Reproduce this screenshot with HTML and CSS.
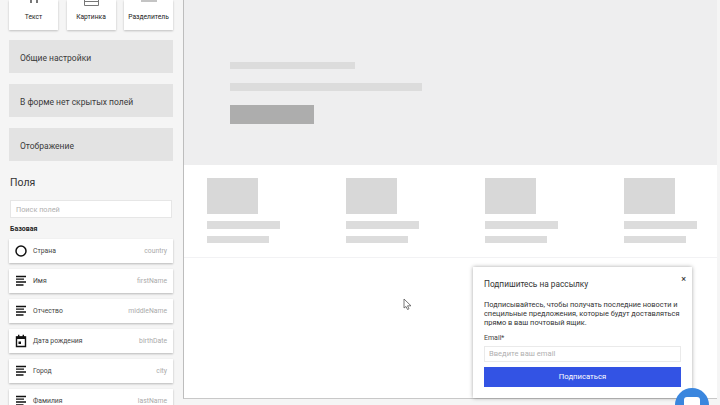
FILE: index.html
```html
<!DOCTYPE html>
<html lang="ru">
<head>
  <meta charset="UTF-8">
  <title>Конструктор формы</title>
  <link rel="stylesheet" href="styles.css">
</head>
<body>
  <div class="app">
    <aside class="sidebar">
      <div class="tiles">
        <div class="tile">
          <svg class="tile-icon" width="16" height="12" viewBox="0 0 16 12"><path d="M5 0v3M11 0v3" stroke="#555" stroke-width="1.6" fill="none"/></svg>
          <span>Текст</span>
        </div>
        <div class="tile">
          <svg class="tile-icon" width="16" height="12" viewBox="0 0 16 12"><path d="M1.5 0v5.500h14V0M1.500 1.500h14" stroke="#777" stroke-width="1" fill="none"/></svg>
          <span>Картинка</span>
        </div>
        <div class="tile">
          <svg class="tile-icon" width="16" height="12" viewBox="0 0 16 12"><path d="M0 0h16v2H0z" fill="#c4c4c4"/></svg>
          <span>Разделитель</span>
        </div>
      </div>

      <div class="panel">Общие настройки</div>
      <div class="panel">В форме нет скрытых полей</div>
      <div class="panel">Отображение</div>

      <h2 class="fields-title">Поля</h2>
      <input class="fields-search" type="text" placeholder="Поиск полей">
      <h3 class="group-title">Базовая</h3>

      <div class="field">
        <svg class="field-icon" width="14" height="14" viewBox="0 0 14 14"><circle cx="7" cy="7" r="5" fill="none" stroke="#111" stroke-width="1.500"/></svg>
        <span class="field-label">Страна</span>
        <span class="field-name">country</span>
      </div>
      <div class="field">
        <svg class="field-icon" width="14" height="14" viewBox="0 0 14 14"><path d="M2 2.500h10M2 5.200h8M2 8h10M2 11h7.500" stroke="#111" stroke-width="1.300" fill="none"/></svg>
        <span class="field-label">Имя</span>
        <span class="field-name">firstName</span>
      </div>
      <div class="field">
        <svg class="field-icon" width="14" height="14" viewBox="0 0 14 14"><path d="M2 2.500h10M2 5.200h8M2 8h10M2 11h7.500" stroke="#111" stroke-width="1.300" fill="none"/></svg>
        <span class="field-label">Отчество</span>
        <span class="field-name">middleName</span>
      </div>
      <div class="field">
        <svg class="field-icon" width="14" height="14" viewBox="0 0 14 14"><path d="M2.500 3h9v9.500h-9z" fill="none" stroke="#111" stroke-width="1.400"/><path d="M2.500 2.500h9v2.500h-9zM4 .8h1.400v2H4zM8.600.8H10v2H8.600zM4.500 7.500h2.500v2.500H4.500z" fill="#111"/></svg>
        <span class="field-label">Дата рождения</span>
        <span class="field-name">birthDate</span>
      </div>
      <div class="field">
        <svg class="field-icon" width="14" height="14" viewBox="0 0 14 14"><path d="M2 2.500h10M2 5.200h8M2 8h10M2 11h7.500" stroke="#111" stroke-width="1.300" fill="none"/></svg>
        <span class="field-label">Город</span>
        <span class="field-name">city</span>
      </div>
      <div class="field">
        <svg class="field-icon" width="14" height="14" viewBox="0 0 14 14"><path d="M2 2.500h10M2 5.200h8M2 8h10M2 11h7.500" stroke="#111" stroke-width="1.300" fill="none"/></svg>
        <span class="field-label">Фамилия</span>
        <span class="field-name">lastName</span>
      </div>
    </aside>

    <main class="canvas">
      <section class="hero">
        <div class="bar hero-line-short"></div>
        <div class="bar hero-line-long"></div>
        <div class="hero-button"></div>
      </section>

      <section class="cards">
        <div class="card">
          <div class="card-image"></div>
          <div class="bar card-line-long"></div>
          <div class="bar card-line-short"></div>
        </div>
        <div class="card">
          <div class="card-image"></div>
          <div class="bar card-line-long"></div>
          <div class="bar card-line-short"></div>
        </div>
        <div class="card">
          <div class="card-image"></div>
          <div class="bar card-line-long"></div>
          <div class="bar card-line-short"></div>
        </div>
        <div class="card">
          <div class="card-image"></div>
          <div class="bar card-line-long"></div>
          <div class="bar card-line-short"></div>
        </div>
      </section>

      <!-- Popup preview -->
      <div class="popup">
        <span class="popup-close">×</span>
        <h4 class="popup-title">Подпишитесь на рассылку</h4>
        <p class="popup-text">Подписывайтесь, чтобы получать последние новости и специльные предложения, которые будут доставляться прямо в ваш почтовый ящик.</p>
        <label class="popup-label">Email*</label>
        <input class="popup-input" type="text" placeholder="Введите ваш email">
        <button class="popup-button">Подписаться</button>
      </div>
    </main>
  </div>

  <svg class="cursor" width="10" height="13" viewBox="0 0 10 13"><path d="M1 1v9l2-1.500 1.500 3 1.500-.7-1.500-3H8z" fill="#fff" stroke="#555" stroke-width=".8"/></svg>
  <div class="chat-clip">
    <div class="chat-button"><div class="chat-button-inner"></div></div>
  </div>
</body>
</html>
```

FILE: styles.css
```css
* {
  margin: 0;
  padding: 0;
  box-sizing: border-box;
}

body {
  width: 720px;
  height: 405px;
  overflow: hidden;
  font-family: Roboto, Arial, sans-serif;
  background-color: #f5f5f5;
  color: #222;
}

.app {
  display: flex;
  height: 405px;
}

/* Sidebar */
.sidebar {
  width: 183px;
  height: 405px;
  overflow: hidden;
  flex-shrink: 0;
  padding: 0 10px 0 9px;
  background-color: #f5f5f5;
}

.tiles {
  display: flex;
  justify-content: space-between;
  height: 30px;
  margin-bottom: 10px;
}

.tile {
  width: 49px;
  height: 30px;
  display: flex;
  flex-direction: column;
  align-items: center;
  background-color: #fff;
  box-shadow: 0 1px 2px rgba(0, 0, 0, 0.22);
  font-size: 6.700px;
}

.tile-icon {
  height: 12px;
}

.tile span {
  line-height: 10px;
}

.panel {
  height: 33px;
  line-height: 36px;
  margin-bottom: 11px;
  padding-left: 11px;
  background-color: #e3e3e3;
  font-size: 8.500px;
  color: #3a3a3a;
}

.fields-title {
  font-size: 10.500px;
  font-weight: 400;
  line-height: 14px;
  padding: 4px 0 0 1px;
  margin-bottom: 10px;
  color: #333;
}

.fields-search {
  display: block;
  width: 162px;
  height: 18px;
  padding-left: 5px;
  margin-left: 1px;
  margin-bottom: 6px;
  border: 1px solid #e6e6e6;
  background-color: #fff;
  font-family: inherit;
  font-size: 7.300px;
}

.fields-search::placeholder,
.popup-input::placeholder {
  color: #b0b0b0;
}

.group-title {
  font-size: 7px;
  font-weight: 700;
  line-height: 10px;
  margin-bottom: 5px;
  padding-left: 1px;
  color: #222;
}

.field {
  display: flex;
  align-items: center;
  height: 24px;
  margin-bottom: 6px;
  padding: 0 6px 0 5px;
  background-color: #fff;
  box-shadow: 0 1px 2px rgba(0, 0, 0, 0.25);
  font-size: 6.800px;
}

.field-icon {
  flex-shrink: 0;
  margin-right: 5px;
}

.field-label {
  flex: 1;
  color: #444;
}

.field-name {
  color: #aaa;
}

/* Canvas */
.canvas {
  position: relative;
  width: 534px;
  height: 399px;
  background-color: #fff;
  border-left: 1px solid #bdbdbd;
  border-bottom: 1px solid #c8c8c8;
}

.hero {
  height: 165px;
  padding: 62px 0 0 46px;
  background-color: #eeeeef;
}

.bar {
  background-color: #dcdcdc;
}

.hero-line-short {
  width: 125px;
  height: 7px;
  margin-bottom: 14px;
}

.hero-line-long {
  width: 192px;
  height: 8px;
  margin-bottom: 14px;
}

.hero-button {
  width: 84px;
  height: 19px;
  background-color: #adadad;
}

.cards {
  display: flex;
  gap: 66px;
  height: 93px;
  padding: 13px 0 0 23px;
  border-bottom: 1px solid #f2f2f4;
}

.card {
  width: 73px;
}

.card-image {
  width: 51px;
  height: 36px;
  margin-bottom: 7px;
  background-color: #d8d8d8;
}

.card-line-long {
  width: 73px;
  height: 8px;
  margin-bottom: 7px;
}

.card-line-short {
  width: 62px;
  height: 7px;
}

/* Popup */
.popup {
  position: absolute;
  left: 289px;
  top: 267px;
  width: 219px;
  height: 131px;
  padding: 12px 11px 0 11px;
  background-color: #fff;
  box-shadow: 0 0 4px rgba(0, 0, 0, 0.35);
}

.popup-close {
  position: absolute;
  top: 6px;
  right: 6px;
  font-size: 9px;
  font-weight: 500;
  line-height: 12px;
  color: #444;
}

.popup-title {
  font-size: 8.300px;
  font-weight: 400;
  line-height: 11px;
  margin-bottom: 10px;
  color: #333;
}

.popup-text {
  font-size: 7.400px;
  line-height: 9.200px;
  margin-bottom: 6px;
  color: #333;
}

.popup-label {
  display: block;
  font-size: 7px;
  line-height: 9px;
  margin-bottom: 3px;
  color: #444;
}

.popup-input {
  display: block;
  width: 197px;
  height: 16px;
  padding-left: 4px;
  margin-bottom: 5px;
  border: 1px solid #eaeaea;
  background-color: #fff;
  font-family: inherit;
  font-size: 7.600px;
}

.popup-button {
  display: block;
  width: 197px;
  height: 20px;
  border: none;
  background-color: #3353e4;
  color: #fff;
  font-family: inherit;
  font-size: 7.700px;
}

.cursor {
  position: absolute;
  left: 403px;
  top: 298px;
}

/* Chat bubble, cut off by the bottom of the window */
.chat-clip {
  position: absolute;
  left: 675px;
  top: 388px;
  width: 34px;
  height: 17px;
  overflow: hidden;
}

.chat-button {
  width: 34px;
  height: 34px;
  padding: 9px;
  border-radius: 50%;
  background-color: #3a86de;
}

.chat-button-inner {
  width: 16px;
  height: 16px;
  border-radius: 3px;
  background-color: #fff;
}
```
